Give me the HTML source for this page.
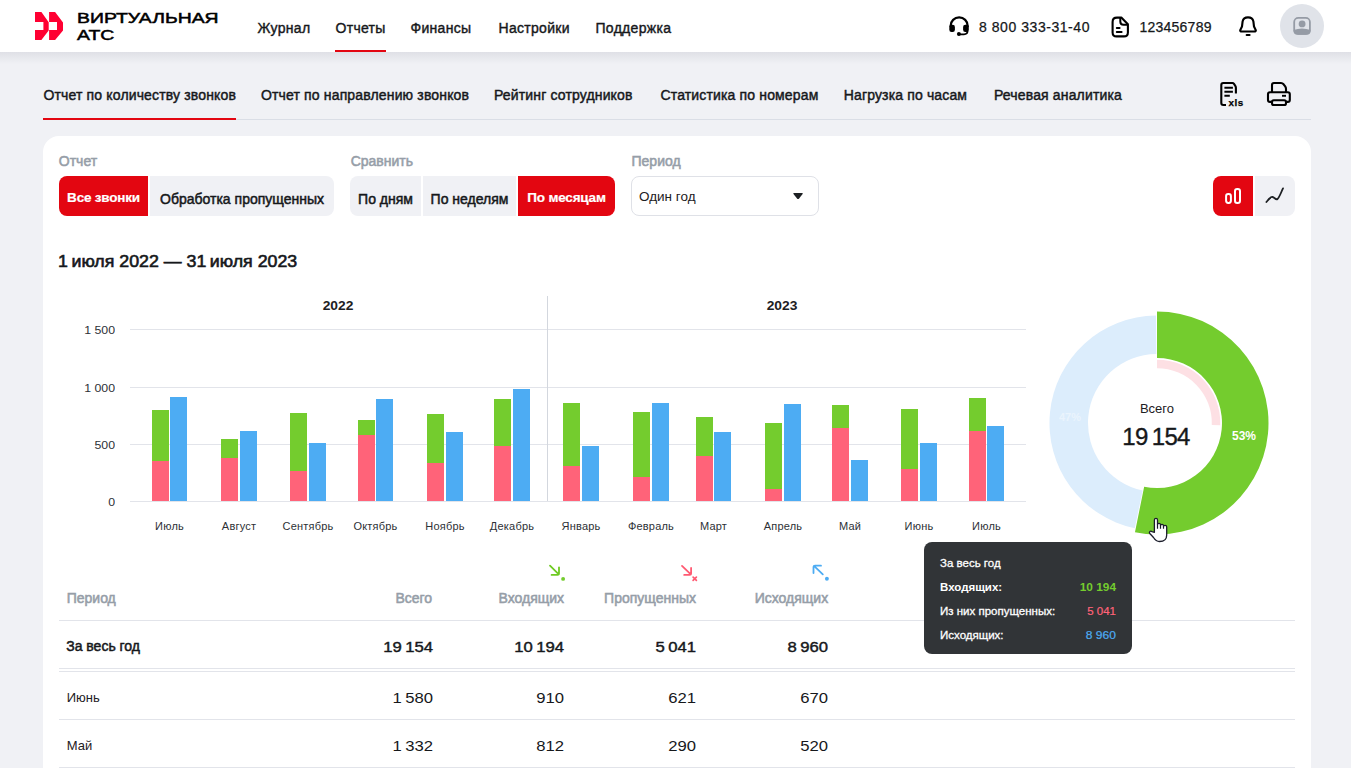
<!DOCTYPE html><html><head><meta charset="utf-8"><style>
*{box-sizing:border-box;margin:0;padding:0}
html,body{width:1351px;height:768px;overflow:hidden}
body{background:#f0f1f5;font-family:"Liberation Sans",sans-serif;color:#1d2023;position:relative}
.a{position:absolute;white-space:nowrap;line-height:1}
.hdr{position:absolute;left:0;top:0;width:1351px;height:52px;background:#fff}
.shd{position:absolute;left:0;top:52px;width:1351px;height:12px;background:linear-gradient(rgba(20,25,50,0.08),rgba(20,25,50,0))}
.nav{font-size:14px;top:20.5px;color:#16181b;letter-spacing:0.3px;-webkit-text-stroke:0.4px #16181b}
.tab{font-size:14px;top:87.8px;color:#16181b;letter-spacing:0.15px;-webkit-text-stroke:0.45px #16181b}
.card{position:absolute;left:43px;top:136px;width:1268px;height:700px;background:#fff;border-radius:16px}
.lbl{font-size:14px;color:#969ea8;top:154.3px;-webkit-text-stroke:0.55px #969ea8}
.btn{position:absolute;top:176px;height:40px;background:#f0f1f5;font-size:14px;color:#16181b;line-height:40px;padding-top:2.7px;text-align:center;white-space:nowrap;-webkit-text-stroke:0.5px #16181b}
.btn.on{background:#e30611;color:#fff;font-size:13.5px;font-weight:700;letter-spacing:-0.2px;-webkit-text-stroke:0.2px #fff;padding-top:2.3px}
.grid{position:absolute;left:130px;width:896px;height:1px;background:#e2e4ea}
.yl{font-size:11px;color:#2d3136;text-align:right;width:40px;left:74.5px;transform:scaleX(1.12);transform-origin:100% 0}
.ml{font-size:11px;color:#2d3136;text-align:center;width:80px;top:521px;letter-spacing:0.2px}
.bar{position:absolute;width:17px}
.g{background:#74cc2e}.r{background:#ff6379}.b{background:#4dacf3}
.th{font-size:14px;color:#969ea8;top:591.4px;-webkit-text-stroke:0.55px #969ea8}
.hl{position:absolute;left:59px;width:1236px;height:1px;background:#e2e4ea}
.rt{text-align:right;width:120px}
.tt{font-size:11.5px;color:#fff}
</style></head><body>
<div class="shd"></div><div class="hdr"></div>
<svg class="a" style="left:0;top:0" width="80" height="52" viewBox="0 0 80 52"><path fill="#ff0032" d="M35,12 L41.4,12 L48.7,22.2 L48.7,30.6 L41.4,40 L35,40 L35,30.1 L43.4,30.1 L43.4,21.9 L35,21.9 Z"/><path fill="#ff0032" d="M49.1,12 L55.1,12 L63,22.6 L63,30.5 L55.1,40 L49.1,40 L49.1,30.1 L57,30.1 L57,21.9 L49.1,21.9 Z"/></svg>
<div class="a" style="left:76.8px;top:10.3px;font-size:15px;line-height:16.4px;color:#000;transform-origin:0 0;transform:scaleX(1.293);-webkit-text-stroke:0.5px #000">ВИРТУАЛЬНАЯ<br>АТС</div>
<div class="a nav" style="left:257.5px">Журнал</div>
<div class="a nav" style="left:335.5px">Отчеты</div>
<div class="a nav" style="left:410.5px">Финансы</div>
<div class="a nav" style="left:498.5px">Настройки</div>
<div class="a nav" style="left:595.5px">Поддержка</div>
<div class="a" style="left:335px;top:50px;width:51px;height:2px;background:#e30611"></div>
<svg class="a" style="left:946px;top:14px" width="26" height="24" viewBox="0 0 26 24"><path d="M4.6,13 V11.9 A8.55,8.55 0 0 1 21.7,11.9 V13" fill="none" stroke="#000" stroke-width="2.2"/><rect x="3.3" y="10.8" width="5.6" height="7.1" rx="2.2" fill="#000"/><rect x="17.1" y="10.8" width="5.7" height="7.1" rx="2.2" fill="#000"/><path d="M13,20.3 H18 Q21.6,20.3 21.6,16.5" fill="none" stroke="#000" stroke-width="1.7"/><circle cx="12.9" cy="19.9" r="2" fill="#000"/></svg>
<div class="a" style="left:979px;top:19.9px;font-size:14px;letter-spacing:0.55px;color:#16181b;-webkit-text-stroke:0.25px #16181b">8 800 333-31-40</div>
<svg class="a" style="left:1110px;top:15px" width="20" height="24" viewBox="0 0 20 24"><path d="M7,2.6 H11.3 L17.9,9.3 V17.5 Q17.9,21.4 14,21.4 H6.5 Q2.6,21.4 2.6,17.5 V7 Q2.6,2.6 7,2.6 Z" fill="none" stroke="#000" stroke-width="2.1" stroke-linejoin="round"/><path d="M10.3,2.8 V6.5 Q10.3,9.8 13.6,9.8 H17.6" fill="none" stroke="#000" stroke-width="2"/><path d="M6.8,12.9 H9.6 M6.8,16.9 H11.6" stroke="#000" stroke-width="2" stroke-linecap="round"/></svg>
<div class="a" style="left:1139.4px;top:19.9px;font-size:14px;letter-spacing:0.25px;color:#16181b;-webkit-text-stroke:0.25px #16181b">123456789</div>
<svg class="a" style="left:1236px;top:14px" width="24" height="24" viewBox="0 0 24 24"><path d="M5,17.5 Q3.8,17 4.3,16 L6,12.5 L6.6,7.5 Q7.4,3.4 12,3.4 Q16.6,3.4 17.4,7.5 L18,12.5 L19.7,16 Q20.2,17 19,17.5 Z" fill="none" stroke="#000" stroke-width="2.1" stroke-linejoin="round"/><path d="M10.6,20.9 H13.6" stroke="#000" stroke-width="2" stroke-linecap="round"/></svg>
<div class="a" style="left:1280px;top:4px;width:44px;height:44px;border-radius:50%;background:#e0e3e9"></div>
<svg class="a" style="left:1290px;top:14px" width="24" height="24" viewBox="0 0 24 24"><rect x="4.2" y="3.9" width="15.7" height="16" rx="4.2" fill="none" stroke="#959ba5" stroke-width="1.8"/><circle cx="12.1" cy="9.9" r="3.4" fill="#959ba5"/><path d="M3.5,16 Q12,12.9 20.6,16 V16.8 Q20.6,20.8 16.6,20.8 H7.5 Q3.5,20.8 3.5,16.8 Z" fill="#959ba5"/></svg>
<div class="a tab" style="left:43.5px">Отчет по количеству звонков</div>
<div class="a tab" style="left:261px">Отчет по направлению звонков</div>
<div class="a tab" style="left:494px">Рейтинг сотрудников</div>
<div class="a tab" style="left:660.5px">Статистика по номерам</div>
<div class="a tab" style="left:843.7px">Нагрузка по часам</div>
<div class="a tab" style="left:994px">Речевая аналитика</div>
<div class="a" style="left:43px;top:119px;width:1268px;height:1px;background:#dadee6"></div>
<div class="a" style="left:43px;top:118px;width:193px;height:2px;background:#e30611"></div>
<svg class="a" style="left:1214px;top:76px" width="36" height="36" viewBox="0 0 36 36"><path d="M12,29 H9.3 Q7.3,29 7.3,27 V9 Q7.3,7 9.3,7 H18.5 Q19.3,7 20,7.9 L21.3,9.8 Q21.9,10.7 21.9,11.7 V17.5" fill="none" stroke="#000" stroke-width="2.1"/><path d="M10.4,11.8 H18.9 M10.4,15.8 H18.9 M10.4,19.8 H15.8" stroke="#000" stroke-width="1.9"/><text x="14.6" y="30" font-family="Liberation Sans" font-weight="700" font-size="9.8" letter-spacing="0.5" fill="#000" stroke="#000" stroke-width="0.25">xls</text></svg>
<svg class="a" style="left:1262px;top:76px" width="36" height="36" viewBox="0 0 36 36"><path d="M10,16.3 V9 Q10,7 12,7 H19 Q20.5,7 21.6,8.3 L23.2,10.4 Q24,11.5 24,13 V16.3" fill="none" stroke="#000" stroke-width="2.1"/><path d="M9.5,25.9 H8 Q6,25.9 6,23.9 V18.3 Q6,16.3 8,16.3 H25.8 Q27.8,16.3 27.8,18.3 V23.9 Q27.8,25.9 25.8,25.9 H24.5" fill="none" stroke="#000" stroke-width="2.1"/><rect x="10" y="24.3" width="14" height="4.7" rx="1.8" fill="none" stroke="#000" stroke-width="2.1"/><path d="M20,19.8 H24" stroke="#000" stroke-width="1.9"/></svg>
<div class="card"></div>
<div class="a lbl" style="left:58.8px">Отчет</div>
<div class="a lbl" style="left:350.7px">Сравнить</div>
<div class="a lbl" style="left:631.5px">Период</div>
<div class="btn on" style="left:59px;width:89px;border-radius:8px 0 0 8px">Все звонки</div>
<div class="btn" style="left:150px;width:184px;border-radius:0 8px 8px 0">Обработка пропущенных</div>
<div class="btn" style="left:350px;width:71px;border-radius:8px 0 0 8px">По дням</div>
<div class="btn" style="left:423px;width:93px">По неделям</div>
<div class="btn on" style="left:518px;width:97px;border-radius:0 8px 8px 0">По месяцам</div>
<div class="a" style="left:631px;top:176px;width:188px;height:40px;border:1px solid #dfe1e7;border-radius:8px;background:#fff"></div>
<div class="a" style="left:639px;top:189.5px;font-size:13.5px">Один год</div>
<svg class="a" style="left:790px;top:190px" width="16" height="12" viewBox="0 0 16 12"><path d="M4,2.9 H12.1 Q13.3,2.9 12.6,4 L9.1,8.4 Q8.05,9.5 7,8.4 L3.5,4 Q2.8,2.9 4,2.9 Z" fill="#1d2023"/></svg>
<div class="a" style="left:1213px;top:176px;width:40px;height:40px;background:#e30611;border-radius:8px 0 0 8px"></div>
<div class="a" style="left:1255px;top:176px;width:40px;height:40px;background:#f0f1f5;border-radius:0 8px 8px 0"></div>
<svg class="a" style="left:1213px;top:176px" width="40" height="40" viewBox="0 0 40 40"><rect x="13.1" y="18.1" width="4.8" height="8.8" rx="2.1" fill="none" stroke="#fff" stroke-width="2"/><rect x="22" y="13" width="5" height="13.9" rx="2.2" fill="none" stroke="#fff" stroke-width="2"/></svg>
<svg class="a" style="left:1255px;top:176px" width="40" height="40" viewBox="0 0 40 40"><path d="M11.4,26 C13.5,23.6 15.5,20.6 17.5,21 C19.5,21.4 20.6,24 22.4,23.1 C24,22.2 26,16.5 28,12.4" fill="none" stroke="#1d2023" stroke-width="1.8" stroke-linecap="round" stroke-linejoin="round"/></svg>
<div class="a" style="left:58.2px;top:253px;font-size:17px;color:#16181b;-webkit-text-stroke:0.6px #16181b;transform:scaleX(1.046);transform-origin:0 0">1&#8201;июля 2022 — 31&#8201;июля 2023</div>
<div class="grid" style="top:329px"></div>
<div class="a yl" style="top:325.2px">1 500</div>
<div class="grid" style="top:386.5px"></div>
<div class="a yl" style="top:382.7px">1 000</div>
<div class="grid" style="top:443.8px"></div>
<div class="a yl" style="top:440.0px">500</div>
<div class="grid" style="top:501px"></div>
<div class="a yl" style="top:497.2px">0</div>
<div class="a" style="left:547px;top:296px;width:1px;height:205px;background:#d3d7de"></div>
<div class="a" style="left:297.5px;top:300.3px;width:80px;text-align:center;font-size:12px;font-weight:700;transform:scaleX(1.15)">2022</div>
<div class="a" style="left:742px;top:300.3px;width:80px;text-align:center;font-size:12px;font-weight:700;transform:scaleX(1.15)">2023</div>
<div class="bar g" style="left:152px;top:410px;height:51px"></div>
<div class="bar r" style="left:152px;top:461px;height:40px"></div>
<div class="bar b" style="left:170px;top:397px;height:104px"></div>
<div class="a ml" style="left:129.5px">Июль</div>
<div class="bar g" style="left:221px;top:439px;height:19px"></div>
<div class="bar r" style="left:221px;top:458px;height:43px"></div>
<div class="bar b" style="left:240px;top:431px;height:70px"></div>
<div class="a ml" style="left:199.0px">Август</div>
<div class="bar g" style="left:290px;top:413px;height:58px"></div>
<div class="bar r" style="left:290px;top:471px;height:30px"></div>
<div class="bar b" style="left:309px;top:443px;height:58px"></div>
<div class="a ml" style="left:268.0px">Сентябрь</div>
<div class="bar g" style="left:358px;top:420px;height:15px"></div>
<div class="bar r" style="left:358px;top:435px;height:66px"></div>
<div class="bar b" style="left:376px;top:399px;height:102px"></div>
<div class="a ml" style="left:335.5px">Октябрь</div>
<div class="bar g" style="left:427px;top:414px;height:49px"></div>
<div class="bar r" style="left:427px;top:463px;height:38px"></div>
<div class="bar b" style="left:446px;top:432px;height:69px"></div>
<div class="a ml" style="left:405.0px">Ноябрь</div>
<div class="bar g" style="left:494px;top:399px;height:47px"></div>
<div class="bar r" style="left:494px;top:446px;height:55px"></div>
<div class="bar b" style="left:513px;top:389px;height:112px"></div>
<div class="a ml" style="left:472.0px">Декабрь</div>
<div class="bar g" style="left:563px;top:403px;height:63px"></div>
<div class="bar r" style="left:563px;top:466px;height:35px"></div>
<div class="bar b" style="left:582px;top:446px;height:55px"></div>
<div class="a ml" style="left:541.0px">Январь</div>
<div class="bar g" style="left:633px;top:412px;height:65px"></div>
<div class="bar r" style="left:633px;top:477px;height:24px"></div>
<div class="bar b" style="left:652px;top:403px;height:98px"></div>
<div class="a ml" style="left:611.0px">Февраль</div>
<div class="bar g" style="left:696px;top:417px;height:39px"></div>
<div class="bar r" style="left:696px;top:456px;height:45px"></div>
<div class="bar b" style="left:714px;top:432px;height:69px"></div>
<div class="a ml" style="left:673.5px">Март</div>
<div class="bar g" style="left:765px;top:423px;height:66px"></div>
<div class="bar r" style="left:765px;top:489px;height:12px"></div>
<div class="bar b" style="left:784px;top:404px;height:97px"></div>
<div class="a ml" style="left:743.0px">Апрель</div>
<div class="bar g" style="left:832px;top:405px;height:23px"></div>
<div class="bar r" style="left:832px;top:428px;height:73px"></div>
<div class="bar b" style="left:851px;top:460px;height:41px"></div>
<div class="a ml" style="left:810.0px">Май</div>
<div class="bar g" style="left:901px;top:409px;height:60px"></div>
<div class="bar r" style="left:901px;top:469px;height:32px"></div>
<div class="bar b" style="left:920px;top:443px;height:58px"></div>
<div class="a ml" style="left:879.0px">Июнь</div>
<div class="bar g" style="left:969px;top:398px;height:33px"></div>
<div class="bar r" style="left:969px;top:431px;height:70px"></div>
<div class="bar b" style="left:987px;top:426px;height:75px"></div>
<div class="a ml" style="left:946.5px">Июль</div>
<svg class="a" style="left:0;top:0" width="1351" height="768" viewBox="0 0 1351 768">
<path d="M1134.74,528.17 A107.5,107.5 0 0 1 1155.97,315.50 L1156.34,354.00 A69,69 0 0 0 1142.71,490.50 Z" fill="#dcedfc"/>
<path d="M1157.00,311.50 A111.5,111.5 0 1 1 1134.96,532.30 L1144.15,486.72 A65,65 0 1 0 1157.00,358.00 Z" fill="#74cc2e"/>
<path d="M1157.00,359.70 A63.3,63.3 0 0 1 1220.26,425.21 L1211.77,424.91 A54.8,54.8 0 0 0 1157.00,368.20 Z" fill="#fde0e4"/>
</svg>
<div class="a" style="left:1117px;top:401.7px;width:80px;text-align:center;font-size:13px">Всего</div>
<div class="a" style="left:1096px;top:425px;width:120px;text-align:center;font-size:24px;letter-spacing:-0.7px;color:#16181b;-webkit-text-stroke:0.35px #16181b">19&#8201;154</div>
<div class="a" style="left:1224px;top:429.5px;width:40px;text-align:center;font-size:12px;font-weight:700;color:#fff">53%</div>
<div class="a" style="left:1050px;top:412px;width:40px;text-align:center;font-size:11px;font-weight:700;color:#eaf4fd">47%</div>
<div class="a th" style="left:66.7px">Период</div>
<div class="a th rt" style="left:312.1px">Всего</div>
<div class="a th rt" style="left:444.1px">Входящих</div>
<div class="a th rt" style="left:576px">Пропущенных</div>
<div class="a th rt" style="left:708.2px">Исходящих</div>
<div class="hl" style="top:620px"></div>
<div class="hl" style="top:668px"></div>
<div class="hl" style="top:671px"></div>
<div class="hl" style="top:719px"></div>
<div class="hl" style="top:767px"></div>
<div class="a" style="left:66.2px;top:639.4px;font-size:14px;color:#16181b;-webkit-text-stroke:0.5px #16181b">За весь год</div>
<div class="a rt" style="left:312.6px;top:639.9000000000001px;font-size:14px;color:#16181b;-webkit-text-stroke:0.4px #16181b;transform:scaleX(1.19);transform-origin:100% 0">19&#8201;154</div>
<div class="a rt" style="left:444.1px;top:639.9000000000001px;font-size:14px;color:#16181b;-webkit-text-stroke:0.4px #16181b;transform:scaleX(1.19);transform-origin:100% 0">10&#8201;194</div>
<div class="a rt" style="left:576px;top:639.9000000000001px;font-size:14px;color:#16181b;-webkit-text-stroke:0.4px #16181b;transform:scaleX(1.19);transform-origin:100% 0">5&#8201;041</div>
<div class="a rt" style="left:708.2px;top:639.9000000000001px;font-size:14px;color:#16181b;-webkit-text-stroke:0.4px #16181b;transform:scaleX(1.19);transform-origin:100% 0">8&#8201;960</div>
<div class="a rt" style="left:312.6px;top:690.9000000000001px;font-size:14px;color:#16181b;transform:scaleX(1.19);transform-origin:100% 0">1&#8201;580</div>
<div class="a rt" style="left:444.1px;top:690.9000000000001px;font-size:14px;color:#16181b;transform:scaleX(1.19);transform-origin:100% 0">910</div>
<div class="a rt" style="left:576px;top:690.9000000000001px;font-size:14px;color:#16181b;transform:scaleX(1.19);transform-origin:100% 0">621</div>
<div class="a rt" style="left:708.2px;top:690.9000000000001px;font-size:14px;color:#16181b;transform:scaleX(1.19);transform-origin:100% 0">670</div>
<div class="a rt" style="left:312.6px;top:739.0px;font-size:14px;color:#16181b;transform:scaleX(1.19);transform-origin:100% 0">1&#8201;332</div>
<div class="a rt" style="left:444.1px;top:739.0px;font-size:14px;color:#16181b;transform:scaleX(1.19);transform-origin:100% 0">812</div>
<div class="a rt" style="left:576px;top:739.0px;font-size:14px;color:#16181b;transform:scaleX(1.19);transform-origin:100% 0">290</div>
<div class="a rt" style="left:708.2px;top:739.0px;font-size:14px;color:#16181b;transform:scaleX(1.19);transform-origin:100% 0">520</div>
<div class="a" style="left:66.7px;top:690.7px;font-size:13px">Июнь</div>
<div class="a" style="left:66.7px;top:738.8px;font-size:13px">Май</div>
<svg class="a" style="left:545px;top:562px" width="22" height="20" viewBox="0 0 22 20"><path d="M5,3.7 L13.8,12.4 M6.6,12.9 H12.4 Q14,12.9 14,11.3 V5.3" fill="none" stroke="#6fca22" stroke-width="1.8" stroke-linecap="round" stroke-linejoin="round"/><circle cx="18.1" cy="16.9" r="1.95" fill="#74cc2e"/></svg>
<svg class="a" style="left:677px;top:562px" width="22" height="20" viewBox="0 0 22 20"><path d="M5,3.9 L13.8,12.4 M7.2,12.9 H12.5 Q14.1,12.9 14.1,11.3 V5.9" fill="none" stroke="#ff5a72" stroke-width="1.8" stroke-linecap="round" stroke-linejoin="round"/><path d="M16.1,15.1 L19.4,18.4 M19.4,15.1 L16.1,18.4" stroke="#ff5a72" stroke-width="1.7" stroke-linecap="round"/></svg>
<svg class="a" style="left:809px;top:562px" width="22" height="20" viewBox="0 0 22 20"><path d="M13.8,12.4 L5,3.9 M4.5,11 V5.3 Q4.5,3.7 6.1,3.7 H12" fill="none" stroke="#4dacf3" stroke-width="1.8" stroke-linecap="round" stroke-linejoin="round"/><circle cx="17.9" cy="16.7" r="1.95" fill="#4dacf3"/></svg>
<div class="a" style="left:924px;top:542px;width:208px;height:112px;background:#313437;border-radius:8px"></div>
<div class="a tt" style="left:940px;top:557.85px;-webkit-text-stroke:0.3px #fff">За весь год</div>
<div class="a tt" style="left:940px;top:581.85px;font-weight:700">Входящих:</div>
<div class="a tt" style="left:940px;top:605.65px;-webkit-text-stroke:0.3px #fff">Из них пропущенных:</div>
<div class="a tt" style="left:940px;top:629.85px;-webkit-text-stroke:0.3px #fff">Исходящих:</div>
<div class="a tt rt" style="left:996px;top:581.85px;font-weight:700;color:#74cc2e;transform:scaleX(1.03);transform-origin:100% 0">10 194</div>
<div class="a tt rt" style="left:996px;top:605.65px;color:#ff6379;-webkit-text-stroke:0.2px #ff6379">5 041</div>
<div class="a tt rt" style="left:996px;top:629.85px;color:#4dacf3;-webkit-text-stroke:0.2px #4dacf3;transform:scaleX(1.05);transform-origin:100% 0">8 960</div>
<svg class="a" style="left:1140px;top:510px" width="35" height="35" viewBox="0 0 35 35"><path d="M14.4,22.3 L14.4,10 Q14.4,8.4 16,8.4 Q17.5,8.4 17.5,10 L17.5,14.5 Q17.5,13.3 19,13.3 Q20.5,13.3 20.5,14.8 L20.5,15.5 Q20.5,14.4 22,14.4 Q23.5,14.4 23.5,15.8 L23.5,16.5 Q23.5,15.3 25.1,15.3 Q26.7,15.3 26.7,17 L26.7,25 Q26.7,31.5 19.5,31.5 Q16,31.5 13.5,27.5 L9.8,23.5 Q9,22.5 9.8,21.6 Q10.8,20.8 12,21.6 Z" fill="#fff" stroke="#1b1d2b" stroke-width="1.3" stroke-linejoin="round"/><path d="M17.5,14.5 V18.7 M20.5,15.5 V18.7 M23.5,16.5 V18.7" stroke="#1b1d2b" stroke-width="1.2"/></svg>
</body></html>
